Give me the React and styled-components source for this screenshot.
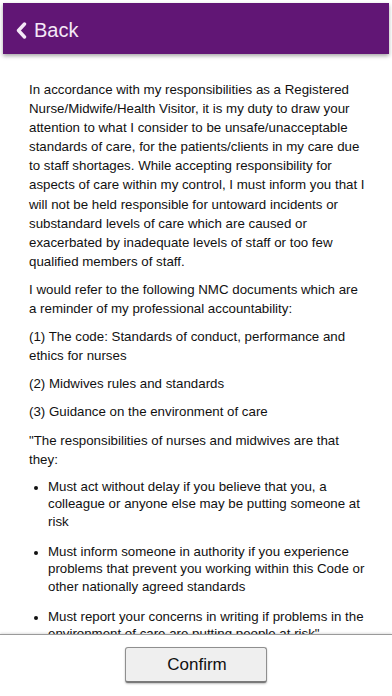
import React from "react";
import styled, { createGlobalStyle } from "styled-components";

const Global = createGlobalStyle`
  html, body { margin: 0; padding: 0; background: #ffffff; }
  body { font-family: "Liberation Sans", Arial, Helvetica, sans-serif; }
  * { box-sizing: border-box; }
`;

const Screen = styled.div`
  width: 392px;
  height: 696px;
  display: flex;
  flex-direction: column;
  background: #fff;
  overflow: hidden;
`;

const HeaderWrap = styled.div`
  padding: 3px 3px 0 3px;
  flex: none;
  position: relative;
  z-index: 2;
`;

const Header = styled.header`
  height: 51px;
  background: #611675;
  display: flex;
  align-items: center;
  padding: 4px 0 0 13px;
  box-shadow: 0 2px 4px rgba(0, 0, 0, 0.35);
`;

const BackButton = styled.button`
  display: flex;
  align-items: center;
  gap: 7px;
  background: none;
  border: none;
  padding: 0;
  color: #f4e8f7;
  font-family: "Liberation Sans", Arial, sans-serif;
  font-size: 20px;
  cursor: pointer;
`;

const Content = styled.main`
  flex: 1;
  overflow: hidden;
  padding: 26px 25px 0 29px;
  color: #111;
  font-size: 13.3px;
  line-height: 19.1px;
`;

const Para = styled.p`
  margin: 0 0 9px 0;
`;

const List = styled.ul`
  margin: 0;
  padding: 0 0 0 19px;
  list-style: disc;
  li::marker { font-size: 12px; }
`;

const Item = styled.li`
  margin-bottom: 12.5px;
  line-height: 17.5px;
`;

const Footer = styled.footer`
  flex: none;
  height: 62px;
  border-top: 1px solid #9a9a9a;
  box-shadow: 0 -1px 2px rgba(0, 0, 0, 0.12);
  background: #fff;
  display: flex;
  justify-content: center;
  padding-top: 12px;
  position: relative;
  z-index: 2;
`;

const ConfirmButton = styled.button`
  width: 142px;
  height: 36px;
  background: #efefef;
  border: 1px solid #8f8f8f;
  border-bottom: 2px solid #7a7a7a;
  border-radius: 3px;
  box-shadow: 0 1px 2px rgba(0, 0, 0, 0.25);
  font-family: "Liberation Sans", Arial, sans-serif;
  font-size: 17px;
  color: #111;
  padding: 0;
  padding-left: 2px;
`;

const Chevron = () => (
  <svg width="11" height="17" viewBox="0 0 11 17">
    <path d="M8.5 2 L2.5 8.5 L8.5 15" fill="none" stroke="#f4e8f7" strokeWidth="3.4" strokeLinecap="round" strokeLinejoin="round" />
  </svg>
);

export default function App() {
  return (
    <Screen>
      <Global />
      <HeaderWrap>
        <Header>
          <BackButton>
            <Chevron />
            Back
          </BackButton>
        </Header>
      </HeaderWrap>
      <Content>
        <Para>
          In accordance with my responsibilities as a Registered Nurse/Midwife/Health Visitor, it is my duty to draw your attention to what I consider to be unsafe/unacceptable standards of care, for the patients/clients in my care due to staff shortages. While accepting responsibility for aspects of care within my control, I must inform you that I will not be held responsible for untoward incidents or substandard levels of care which are caused or exacerbated by inadequate levels of staff or too few qualified members of staff.
        </Para>
        <Para>
          I would refer to the following NMC documents which are a reminder of my professional accountability:
        </Para>
        <Para>(1) The code: Standards of conduct, performance and ethics for nurses</Para>
        <Para>(2) Midwives rules and standards</Para>
        <Para>(3) Guidance on the environment of care</Para>
        <Para>"The responsibilities of nurses and midwives are that they:</Para>
        <List>
          <Item>Must act without delay if you believe that you, a colleague or anyone else may be putting someone at risk</Item>
          <Item>Must inform someone in authority if you experience problems that prevent you working within this Code or other nationally agreed standards</Item>
          <Item>Must report your concerns in writing if problems in the environment of care are putting people at risk"</Item>
        </List>
      </Content>
      <Footer>
        <ConfirmButton>Confirm</ConfirmButton>
      </Footer>
    </Screen>
  );
}
